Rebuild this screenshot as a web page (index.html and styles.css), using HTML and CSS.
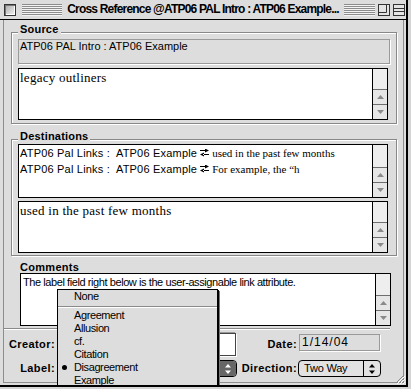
FILE: index.html
```html
<!DOCTYPE html>
<html lang="en">
<head>
<meta charset="utf-8">
<title>Cross Reference</title>
<link rel="stylesheet" href="styles.css">
</head>
<body>
<div class="win">
  <div class="titlebar">
    <div class="tb-side tb-left">
      <span class="closebox"></span>
      <span class="stripes"></span>
    </div>
    <div class="title">Cross Reference @ATP06 PAL Intro : ATP06 Example...</div>
    <div class="tb-side tb-right">
      <span class="stripes"></span>
      <svg class="wbox" width="12" height="12" viewBox="0 0 12 12"><rect x="0.5" y="0.5" width="11" height="11" fill="#e4e4e4" stroke="#333"/><path d="M8.5 1V8.5H1" fill="none" stroke="#333"/></svg>
      <svg class="wbox" width="12" height="12" viewBox="0 0 12 12"><rect x="0.5" y="0.5" width="11" height="11" fill="#e4e4e4" stroke="#333"/><path d="M1 4.5H11M1 7.5H11" fill="none" stroke="#333"/></svg>
    </div>
  </div>
  <div class="content">
    <section class="group g-source">
      <h2 class="gtitle">Source</h2>
      <div class="field ro src">ATP06 PAL Intro : ATP06 Example</div>
      <div class="ta ta-src">
        <div class="ta-body serif">legacy outliners</div>
        <div class="sb">
          <div class="sb-track"></div>
          <div class="sb-btn"><svg width="7" height="4" viewBox="0 0 7 4"><path d="M3.5 0L7 4H0z" fill="#8a8a8a"/></svg></div>
          <div class="sb-btn"><svg width="7" height="4" viewBox="0 0 7 4"><path d="M0 0H7L3.5 4z" fill="#8a8a8a"/></svg></div>
        </div>
      </div>
    </section>
    <section class="group g-dest">
      <h2 class="gtitle">Destinations</h2>
      <div class="ta ta-list">
        <div class="ta-body rows">
          <div class="row"><span class="rl">ATP06 Pal Links :&nbsp; ATP06 Example</span><svg class="xarr" width="9" height="8" viewBox="0 0 9 8"><path d="M0 1h6v1H0z M5 -0.5L9 1.5L5 3.5z M3 5h6v1H3z M4 3.5L0 5.5L4 7.5z" fill="#000"/></svg><span class="rr">used in the past few months</span></div>
          <div class="row"><span class="rl">ATP06 Pal Links :&nbsp; ATP06 Example</span><svg class="xarr" width="9" height="8" viewBox="0 0 9 8"><path d="M0 1h6v1H0z M5 -0.5L9 1.5L5 3.5z M3 5h6v1H3z M4 3.5L0 5.5L4 7.5z" fill="#000"/></svg><span class="rr">For example, the “h</span></div>
        </div>
        <div class="sb">
          <div class="sb-track"></div>
          <div class="sb-btn"><svg width="7" height="4" viewBox="0 0 7 4"><path d="M3.5 0L7 4H0z" fill="#8a8a8a"/></svg></div>
          <div class="sb-btn"><svg width="7" height="4" viewBox="0 0 7 4"><path d="M0 0H7L3.5 4z" fill="#8a8a8a"/></svg></div>
        </div>
      </div>
      <div class="ta ta-dtext">
        <div class="ta-body serif">used in the past few months</div>
        <div class="sb">
          <div class="sb-track"></div>
          <div class="sb-btn"><svg width="7" height="4" viewBox="0 0 7 4"><path d="M3.5 0L7 4H0z" fill="#8a8a8a"/></svg></div>
          <div class="sb-btn"><svg width="7" height="4" viewBox="0 0 7 4"><path d="M0 0H7L3.5 4z" fill="#8a8a8a"/></svg></div>
        </div>
      </div>
    </section>
    <section class="comments">
      <h2 class="ctitle">Comments</h2>
      <div class="ta ta-com">
        <div class="ta-body small">The label field right below is the user-assignable link attribute.</div>
        <div class="sb">
          <div class="sb-track"></div>
          <div class="sb-btn"><svg width="7" height="4" viewBox="0 0 7 4"><path d="M3.5 0L7 4H0z" fill="#8a8a8a"/></svg></div>
          <div class="sb-btn"><svg width="7" height="4" viewBox="0 0 7 4"><path d="M0 0H7L3.5 4z" fill="#8a8a8a"/></svg></div>
        </div>
      </div>
    </section>
    <div class="sep"></div>
    <div class="props">
      <span class="plabel">Creator:</span>
      <div class="efield"></div>
      <span class="plabel">Date:</span>
      <div class="field ro date">1/14/04</div>
      <span class="plabel">Label:</span>
      <div class="popup pressed"><span class="pv"></span><span class="pa"><svg width="6" height="10" viewBox="0 0 6 10"><path d="M3 0L6 3.5H0z M0 6.5H6L3 10z" fill="#fff"/></svg></span></div>
      <span class="plabel">Direction:</span>
      <div class="popup"><span class="pv">Two Way</span><span class="pa"><svg width="6" height="10" viewBox="0 0 6 10"><path d="M3 0L6 3.5H0z M0 6.5H6L3 10z" fill="#000"/></svg></span></div>
    </div>
  </div>
  <svg class="grip" width="12" height="12" viewBox="0 0 12 12"><path d="M11 3L3 11M11 6L6 11M11 9L9 11" stroke="#888" fill="none"/><path d="M12 4L4 12M12 7L7 12M12 10L10 12" stroke="#fff" fill="none"/></svg>
  <div class="menu">
    <div class="mi"><span class="mk"></span>None</div>
    <div class="msep"></div>
    <div class="mi"><span class="mk"></span>Agreement</div>
    <div class="mi"><span class="mk"></span>Allusion</div>
    <div class="mi"><span class="mk"></span>cf.</div>
    <div class="mi"><span class="mk"></span>Citation</div>
    <div class="mi"><span class="mk"><i class="dot"></i></span>Disagreement</div>
    <div class="mi"><span class="mk"></span>Example</div>
  </div>
</div>
</body>
</html>
```

FILE: styles.css
```css
* { box-sizing: border-box; margin: 0; padding: 0; }
html, body { width: 411px; height: 389px; overflow: hidden; }
body {
  background: #d4d4d4;
  font: 11px/13px "Liberation Sans", Arial, sans-serif;
  color: #000;
}
.win {
  position: relative;
  width: 408px;
  height: 387px;
  background: #dddddd;
  border-right: 2px solid #000;
  border-bottom: 2px solid #000;
  overflow: hidden;
  display: flex;
  flex-direction: column;
}

/* title bar */
.titlebar {
  height: 20px;
  flex: none;
  border-bottom: 1px solid #000;
  display: grid;
  grid-template-columns: 1fr auto 1fr;
  align-items: center;
  background: #dddddd;
}
.tb-side { display: flex; align-items: center; height: 19px; }
.closebox {
  width: 12px; height: 12px; margin-left: 4px; flex: none;
  border: 1px solid #333;
  background: linear-gradient(135deg, #aaa, #f4f4f4);
  box-shadow: inset 1px 1px 0 #777, inset -1px -1px 0 #fff;
}
.stripes {
  flex: 1; height: 12px;
  background: repeating-linear-gradient(#8c8c8c 0 1px, #f4f4f4 1px 2px);
}
.tb-left .stripes { margin: 0 4px 0 6px; }
.tb-right .stripes { margin: 0 3px 0 4px; }
.wbox { flex: none; margin-right: 3px; }
.wbox:last-child { margin-right: 1px; }
.title {
  font: bold 12px/19px "Liberation Sans", Arial, sans-serif;
  letter-spacing: -0.8px;
  white-space: nowrap;
  padding: 0 1px;
}

/* content */
.content {
  flex: 1;
  display: flex;
  flex-direction: column;
  align-items: flex-start;
  margin: 0 2px 2px 3px;
  padding: 12px 0 0 7px;
  border-left: 1px solid #8e8e8e;
  border-right: 1px solid #8e8e8e;
  border-bottom: 1px solid #8e8e8e;
}
.group {
  width: 386px;
  border: 1px solid #888;
  box-shadow: inset 1px 1px 0 #fff, 1px 1px 0 #fff;
  display: flex;
  flex-direction: column;
  align-items: flex-start;
  padding: 0 6px 3px 6px;
}
.g-dest { margin-top: 15px; padding-bottom: 2px; }
.gtitle {
  font: bold 11px/13px "Liberation Sans", Arial, sans-serif;
  letter-spacing: 0.2px;
  margin: -10px 0 3px 0;
  padding: 0 2px;
  background: #dddddd;
}
.g-dest .gtitle { margin-bottom: 1px; }

.field {
  height: 25px;
  border: 1px solid #9a9a9a;
  box-shadow: 1px 1px 0 #fff;
  padding: 0 1px;
  white-space: nowrap;
}
.ro { background: #dddddd; }
.src { width: 372px; margin-bottom: 4px; }

.ta {
  width: 370px;
  height: 52px;
  border: 1px solid #000;
  background: #fff;
  display: flex;
}
.ta-body { flex: 1; padding: 0 1px; overflow: hidden; white-space: nowrap; }
.serif { font: 13px/16px "Liberation Serif", "Times New Roman", serif; letter-spacing: 0.25px; padding-top: 1px; }
.ta-list { height: 54px; margin-bottom: 3px; }
.rows { display: flex; flex-direction: column; }
.row { height: 16px; line-height: 16px; display: flex; align-items: center; }
.rl { white-space: pre; letter-spacing: 0.2px; }
.xarr { margin: 0 3px 0 3px; flex: none; }
.rr { font: 11px/16px "Liberation Serif", "Times New Roman", serif; letter-spacing: 0; }

.sb {
  width: 15px;
  flex: none;
  border-left: 1px solid #000;
  background: #eeeeee;
  display: flex;
  flex-direction: column;
}
.sb-track { flex: 1; }
.sb-btn {
  height: 15px;
  flex: none;
  border-top: 1px solid #6e6e6e;
  background: #e6e6e6;
  display: flex;
  align-items: center;
  justify-content: center;
}

.comments { display: flex; flex-direction: column; align-items: flex-start; margin-top: 5px; }
.ctitle {
  font: bold 11px/12px "Liberation Sans", Arial, sans-serif;
  letter-spacing: 0.3px;
  margin-left: 9px;
}
.ta-com { width: 371px; height: 53px; margin-left: 9px; }
.small { font-size: 11px; line-height: 13px; letter-spacing: -0.42px; padding: 2px 2px 0 2px; }

.sep {
  width: 386px;
  height: 2px;
  margin: 2px 0 0 -7px;
  border-top: 1px solid #8a8a8a;
  border-bottom: 1px solid #fff;
}

.props {
  margin: 3px 0 0 -7px;
  display: grid;
  grid-template-columns: 52px 181px 61px 83px;
  grid-template-rows: 23px 17px;
  row-gap: 4px;
  align-items: center;
}
.plabel {
  font: bold 11px/13px "Liberation Sans", Arial, sans-serif;
  letter-spacing: 0.4px;
  text-align: right;
  padding-right: 1px;
}
.efield {
  width: 177px; height: 23px; margin-left: 3px;
  background: #fff;
  border: 1px solid #444;
  box-shadow: 1px 1px 0 #fff, -1px -1px 0 #999;
}
.date {
  width: 81px; height: 17px; margin-left: 1px; align-self: start; margin-top: 1px;
  font-size: 12px; line-height: 15px; padding-left: 2px; letter-spacing: 1px;
}
.popup {
  height: 17px;
  border: 1px solid #000;
  border-radius: 4px;
  background: #e2e2e2;
  display: flex;
  overflow: hidden;
}
.props .popup.pressed { width: 178px; margin-left: 3px; }
.pv { flex: 1; padding-left: 5px; font-size: 11px; line-height: 15px; letter-spacing: -0.2px; }
.pa {
  width: 17px; flex: none;
  border-left: 1px solid #000;
  display: flex; align-items: center; justify-content: center;
}
.pressed .pa { background: #666; }

.grip { position: absolute; right: 1px; bottom: 1px; }

/* popup menu */
.menu {
  position: absolute;
  left: 57px;
  top: 289px;
  width: 161px;
  height: 120px;
  background: #dddddd;
  border: 1px solid #000;
  box-shadow: 1px 1px 0 #000, 2px 2px 0 #777;
  font-size: 11px;
  letter-spacing: -0.4px;
}
.mi { height: 13px; line-height: 13px; display: flex; align-items: center; }
.mk { width: 16px; height: 13px; flex: none; display: flex; align-items: center; padding-left: 4px; }
.dot { display: block; width: 5px; height: 5px; border-radius: 50%; background: #000; }
.msep {
  height: 6px;
  background: linear-gradient(transparent 0 3px, #8a8a8a 3px 4px, #fff 4px 5px, transparent 5px);
}
```
